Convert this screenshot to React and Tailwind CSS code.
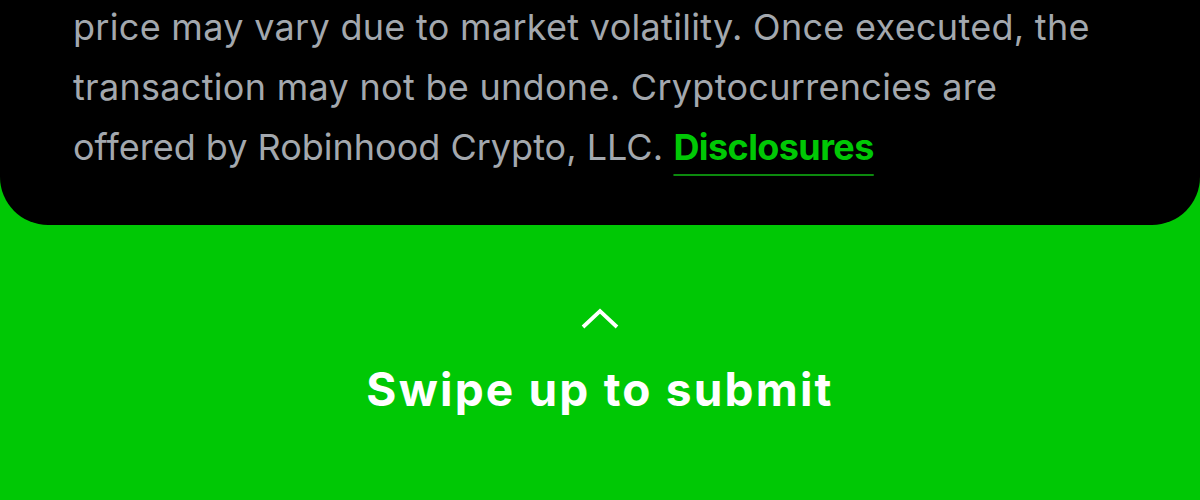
export default function App() {
  return (
    <div className="w-[1200px] h-[500px] bg-[#00c805] overflow-hidden" style={{ fontFamily: 'Inter, Roboto, "Liberation Sans", sans-serif' }}>
      <div className="bg-black rounded-b-[48px] h-[228px] pl-[73px] pr-[40px] -mt-[3px]">
        <p className="text-[36px] leading-[60px] text-[#a3a8ae] tracking-[0.3px] whitespace-nowrap">
          price may vary due to market volatility. Once executed, the<br />
          transaction may not be undone. Cryptocurrencies are<br />
          <span className="tracking-[0px]">offered by Robinhood Crypto, LLC.</span>{" "}
          <span className="text-[#00c805] font-bold tracking-[-0.6px] underline decoration-[#0c8a0e] decoration-[2px] underline-offset-[14px]">Disclosures</span>
        </p>
      </div>
      <div className="flex flex-col items-center pt-[81px]">
        <svg width="40" height="24" viewBox="0 0 40 24" fill="none">
          <path d="M3 21 L20 5 L37 21" stroke="white" strokeWidth="3.8" />
        </svg>
        <div className="mt-[36px] text-white font-bold text-[46px] leading-none tracking-[2.2px]">Swipe up to submit</div>
      </div>
    </div>
  );
}
